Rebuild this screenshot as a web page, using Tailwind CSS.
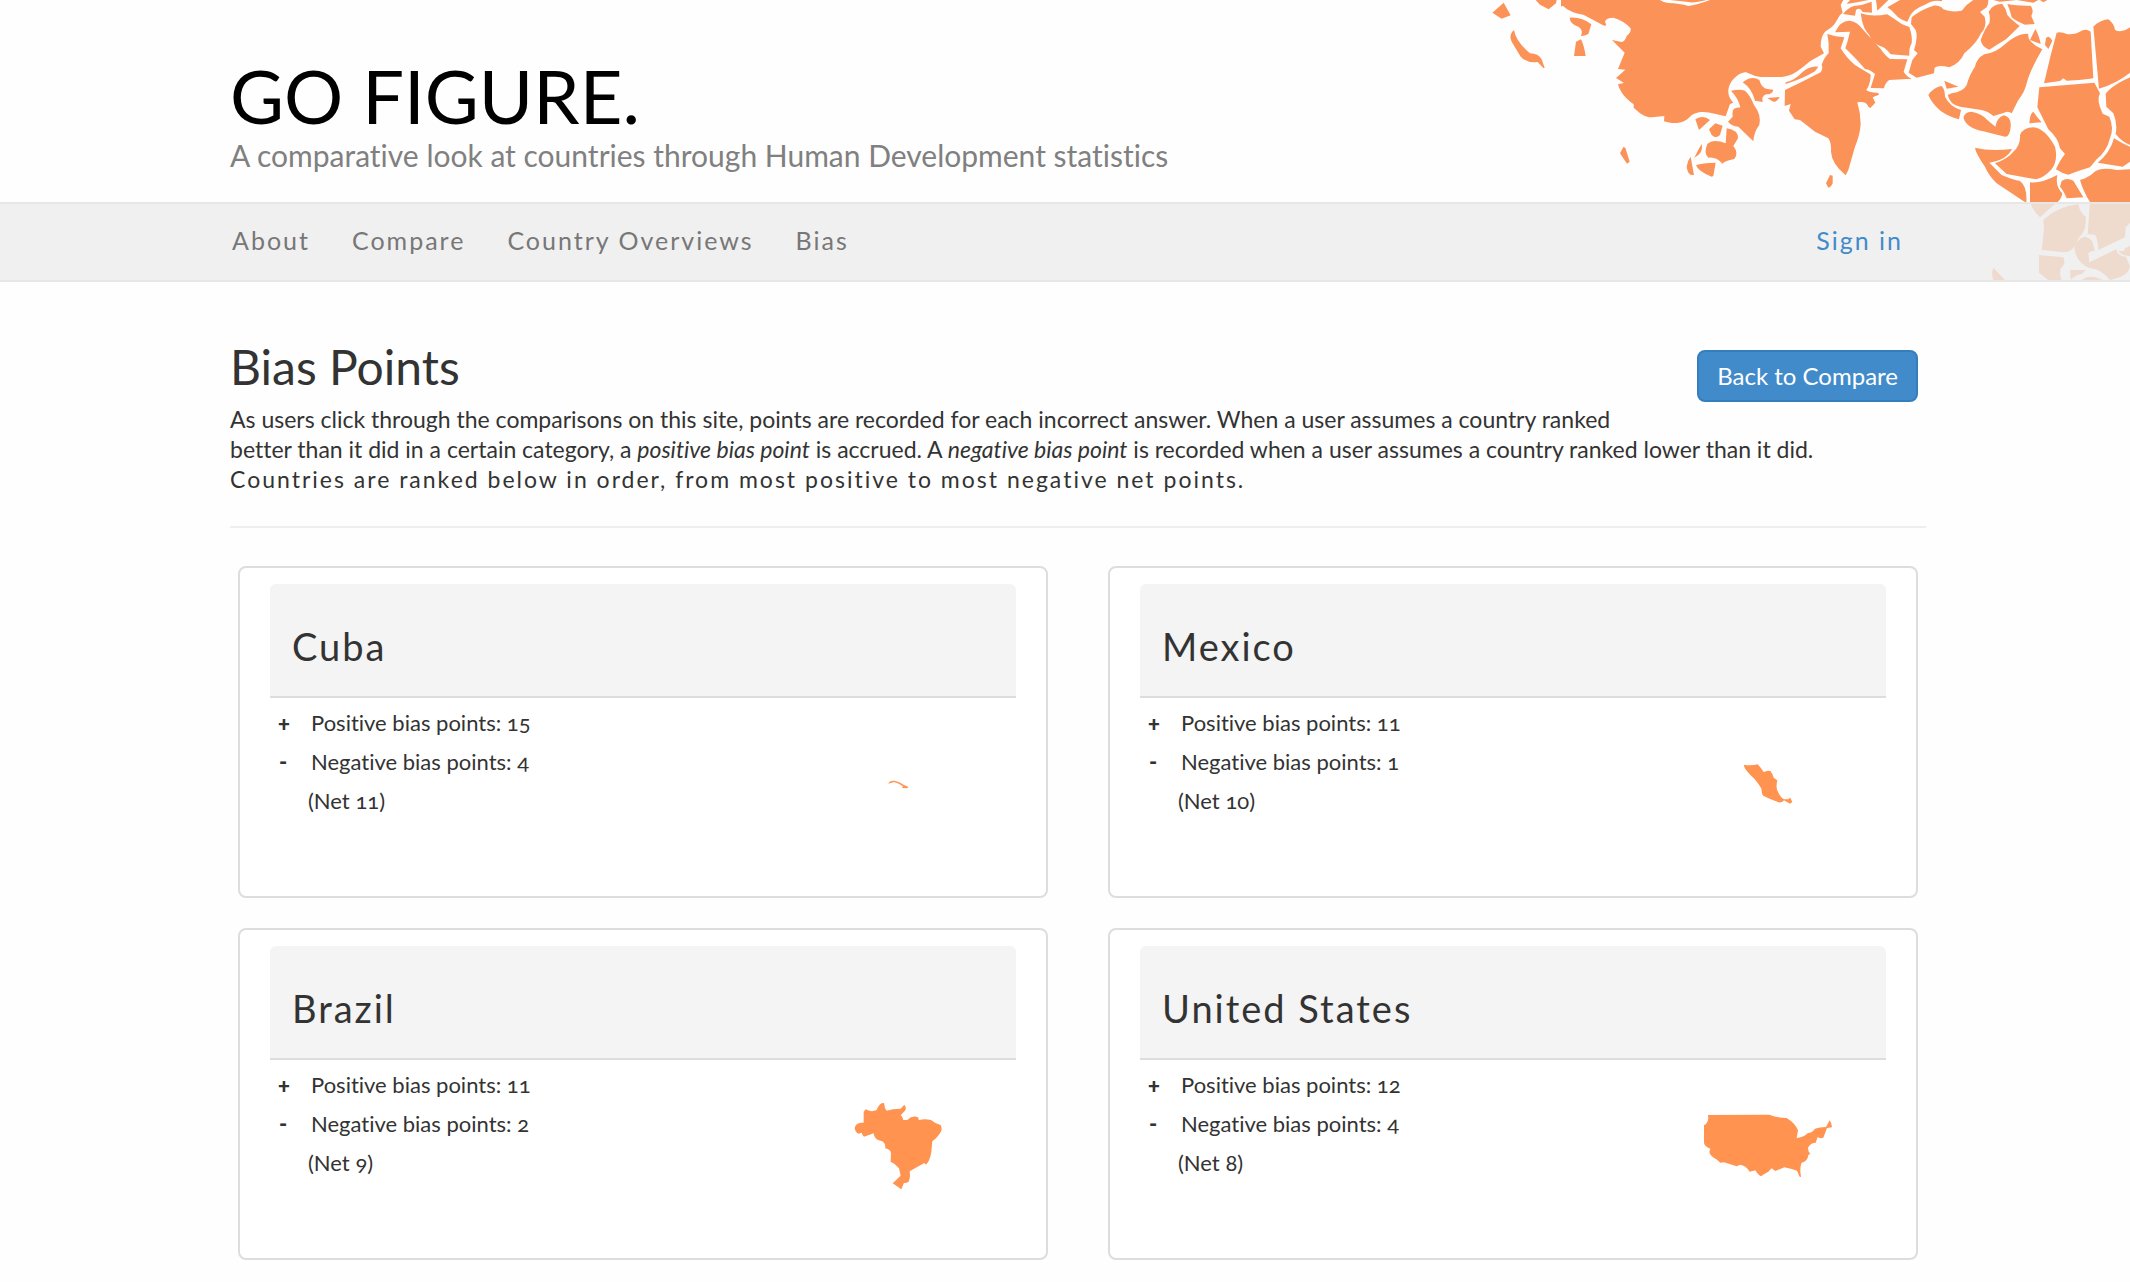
<!DOCTYPE html>
<html lang="en">
<head>
<meta charset="utf-8">
<title>Go Figure - Bias Points</title>
<script src="https://cdn.jsdelivr.net/npm/@tailwindcss/browser@4"></script>
</head>
<body class="relative bg-[#fefefe] font-[Lato,sans-serif] text-[#333] [font-variant-ligatures:none] overflow-x-hidden">

<!-- Decorative world map, behind the header and the translucent nav -->
<svg class="absolute top-0 right-0 w-[650px] h-[280px]" viewBox="0 0 1950 840" fill="#fb9358" aria-hidden="true">
  <path d="M243,0 L243,20 L248,17 Q270,38 310,44 L340,60 L372,77 L379,76 L375,65 Q378,53 400,53 Q432,62 452,85 Q454,97 440,108 Q435,125 425,126 L396,120 L434,158 L414,207 L436,209 L408,234 L432,249 L414,253 C420,275 435,295 461,313 L461,323 C480,340 492,351 515,352 L553,348 L552,364 C580,373 610,372 630,350 C640,338 665,332 690,338 L737,349 L750,312 L760,308 Q745,292 745,275 C745,245 775,217 798,217 C815,222 820,230 845,231 L905,231 C940,228 960,208 990,184 L1032,160 L1022,140 Q1022,110 1035,95 Q1060,80 1065,70 L1080,45 L1088,38 L1082,15 L1090,0 L690,0 Q650,15 625,18 Q600,10 565,9 Q550,7 540,0Z"/>
  <path d="M570,0 L680,0 Q640,10 625,6Z"/>
  <path d="M71,8 L92,46 L65,56 L37,38Z M167,0 L230,0 L228,10 L206,28 L180,14Z M102,90 Q108,125 150,160 Q175,160 185,178 L194,204 L190,204 L173,186 Q140,190 122,170 L95,125 Q85,105 102,90Z M269,53 Q305,50 334,73 L325,102 Q315,108 302,108 Q312,92 295,80 Q270,72 269,53Z M303,118 Q312,135 317,168 L282,168 L288,125Z M430,441 L436,443 L449,485 L441,491 L420,460Z M646,358 Q670,343 690,360 L657,390Z M687,388 L706,370 L728,377 L720,405 Q707,418 695,405Z"/>
  <path d="M740,385 Q775,390 774,415 L760,438 Q777,460 763,477 Q735,482 727,491 Q710,470 685,473 Q670,460 682,432 Q700,415 737,430Z M753,272 Q780,266 795,272 Q810,285 822,315 Q845,345 838,375 Q822,395 820,424 L775,380 Q755,378 744,365 L758,350 Q755,325 768,324 L781,322 Q775,295 753,272Z M788,247 Q815,225 838,240 Q845,265 862,267 L880,269 Q878,283 858,283 Q843,290 848,306 L825,302 Q815,265 788,247Z M862,294 L899,291 Q890,307 880,305Z M665,432 Q672,458 643,473Q655,448 665,432Z M632,470 L642,525 Q623,528 620,500Q622,482 632,470Z M648,496 Q665,488 707,488 L700,528 L695,530 Q655,515 648,496Z"/>
  <g transform="translate(960 0)">
    <path d="M-45,270 L0,248 L62,217 Q70,205 65,195 Q72,172 86,160 Q88,130 82,102 L107,109 L133,112 L122,145 Q140,175 165,195 Q180,205 210,222 L212,225 Q212,250 199,270 Q205,277 235,279 L237,284 L218,292 L226,308 L211,324 L205,320 Q200,302 172,307 Q182,340 182,372 Q180,405 165,440 L145,510 L137,526 Q95,490 93,455 Q95,430 85,415 L45,395 L0,360 L-16,358 L-33,332 L-28,312 L-46,318Z"/>
    <path d="M-43,247 Q-15,240 5,218 Q30,196 55,200 L45,214 Q5,238 -43,252Z M78,550 L90,525 L98,527 L98,550 Q92,563 85,563Z"/>
    <path d="M105,97 Q122,60 150,62 Q172,65 190,90 L240,145 Q258,170 270,177 L322,178 L311,215 Q320,230 335,236 L268,240 Q255,248 252,265 L212,264 L225,222 Q210,208 195,207 L180,190 Q152,160 136,145 Q143,125 150,95Z"/>
    <path d="M182,40 Q215,52 262,43 Q285,58 305,72 L328,81 Q338,110 335,130 Q326,145 328,167 L272,163 Q257,142 240,138 Q215,128 208,105 Q188,88 182,40Z M129,42 Q145,22 162,18 Q190,15 215,5 L216,38 L188,36 Q180,20 168,30 L165,47Z M140,12 L150,0 L205,0 Q170,8 140,12Z M228,0 L265,0 L232,32Z"/>
    <path d="M262,22 L300,0 L427,0 L425,4 Q400,-2 375,14 Q340,27 330,48 L322,65 Q300,60 285,42Q275,30 262,22Z"/>
    <path d="M335,52 Q360,30 400,17 Q420,15 430,28 Q452,38 485,32 Q500,12 520,0 L565,0 Q565,15 560,22 L540,36 L554,50 Q562,80 543,100 Q530,130 493,160 Q480,190 448,202 Q415,194 404,203 L402,220 L350,233 L326,218 L337,180 L353,160 L342,150 Q355,110 347,90 L333,72Z"/>
    <path d="M566,35 Q580,10 607,12 Q618,25 622,45 Q635,60 659,78 L618,118 Q590,135 568,149 Q545,140 542,120 Q555,85 568,70Q572,50 566,35Z M622,12 Q650,18 692,17 Q703,30 694,48 L704,72 L675,74 Q650,65 635,52 Q630,30 622,12Z M580,0 L715,0 L700,8 L650,0 L600,5Z M720,0 L742,0 L730,7Z"/>
    <path d="M553,163 Q585,160 615,133 Q655,97 685,102 Q680,125 727,148 Q690,210 680,250 Q675,275 655,300 L635,340 Q625,330 608,340 L580,348 Q560,330 530,328 L480,320 Q450,315 443,285 L455,280 Q490,275 500,255 Q510,220 525,200 Q530,175 553,163Z"/>
    <path d="M433,242 L475,260 L440,266Z M385,285 Q400,262 425,258 Q435,268 435,290 Q450,320 483,330 L477,358 Q450,352 422,333 Q395,310 385,285Z M491,355 Q492,335 515,335 Q545,340 562,360 L586,380 Q590,353 612,346 Q635,352 632,380 Q630,410 615,410 L550,394 Q500,385 491,355Z M706,87 Q717,105 722,132 L690,120Z M738,115 Q745,102 757,122 L745,147 L735,135Z"/>
    <path d="M770,98 Q785,95 800,102 Q825,105 845,92 Q860,86 872,95 L880,235 Q850,240 800,242 L790,235 L780,243 L732,250 Q750,170 770,98Z M880,80 Q900,60 925,58 Q942,70 945,90 Q965,100 990,82 L990,218 Q950,250 897,266Z"/>
    <path d="M718,262 L883,248 L900,280 Q888,300 908,341 L928,350 Q943,385 930,415 Q920,455 890,478 L870,502 Q850,508 805,524 Q785,520 768,508 Q780,480 795,462 L780,445 Q775,415 745,388 L712,322 Q715,290 718,262Z"/>
    <path d="M990,232 Q930,260 917,282 L919,320 L940,340 Q953,370 947,402 Q965,425 990,435Z M700,335 Q710,350 725,367 L688,370 Q690,340 700,335Z M660,405 Q670,382 700,382 Q735,385 765,440 Q775,480 755,508 Q730,535 708,538 L620,522 L585,490 Q625,475 640,455 Q662,435 660,405Z"/>
    <path d="M525,443 Q570,455 636,447 Q620,480 568,488 L605,525 Q640,540 660,543 Q682,560 679,606 L675,606 L665,600 Q620,570 590,550 Q565,525 555,500 Q527,460 525,443Z M690,547 Q720,552 772,525 Q765,560 787,580 Q785,600 765,612 L720,652 Q700,635 690,606Z M785,543 Q800,532 820,542 L850,592 L800,595 Q790,570 780,560Z"/>
    <path d="M840,540 Q870,530 880,518 Q900,500 950,510 L990,508 L990,670 L977,682 L975,712 L895,750 Q893,715 885,705 L863,702 L870,606 Q850,575 840,540Z M942,415 Q965,430 990,440 L990,485 L968,500 L893,488 Q930,460 942,415Z M730,660 Q770,620 835,612 Q838,635 857,650 Q862,690 835,715 Q822,758 790,757 L725,750 L732,690Z"/>
    <path d="M823,745 Q830,715 855,710 Q878,715 880,735 L885,752 Q865,755 865,760 L868,787 L948,748 Q955,770 978,770 L990,800 Q985,820 960,832 L930,840 Q900,805 870,805 Q830,790 823,745Z M717,765 L790,772 Q800,790 782,805 Q778,825 785,840 L745,840 L717,818Z M810,810 L858,810 L845,822 Q825,825 812,840Z M845,840 Q870,820 908,840Z M580,803 L615,840 L580,840 Q573,820 580,803Z M955,752 Q975,757 975,745 L990,738 L990,768 Q965,768 955,752Z"/>
  </g>
</svg>

<header class="relative h-[202px] pl-[230px] pt-14">
  <h1 class="text-[74px] leading-[80px] text-black">GO FIGURE.</h1>
  <p class="text-[30px] leading-[38px] text-[#808080]">A comparative look at countries through Human Development statistics</p>
</header>

<nav class="relative flex items-center justify-between h-20 pl-[232px] pr-[227px] pb-1 border-y-2 border-[#e7e7e7] bg-[#ececec]/80 text-[25px] leading-8 tracking-[2px] text-[#777]">
  <div class="flex gap-[42px]">
    <a href="#">About</a>
    <a href="#">Compare</a>
    <a href="#">Country Overviews</a>
    <a href="#">Bias</a>
  </div>
  <a href="#" class="text-[#428bca]">Sign in</a>
</nav>

<main class="pl-[230px] pr-[204px] pt-[60px] pb-6">
  <section class="border-b-2 border-[#eee] pb-8">
    <button type="button" class="float-right mt-2 mr-2 h-[52px] px-[18px] rounded-lg border-2 border-[#357ebd] bg-[#428bca] text-[24px] leading-8 text-white">Back to Compare</button>
    <h2 class="text-[48px] leading-[50px] mb-3">Bias Points</h2>
    <p class="text-[23px] leading-[30px]">As users click through the comparisons on this site, points are recorded for each incorrect answer. When a user assumes a country ranked<br>better than it did in a certain category, a <em>positive bias point</em> is accrued. A <em>negative bias point</em> is recorded when a user assumes a country ranked lower than it did.</p>
    <p class="text-[23px] leading-[30px] tracking-[2px]">Countries are ranked below in order, from most positive to most negative net points.</p>
  </section>

  <div class="grid grid-cols-2 gap-x-[60px] gap-y-[30px] px-2 pt-[38px]">
    <article class="h-[332px] rounded-lg border-2 border-[#ddd] bg-white px-[30px] pt-4">
      <h3 class="h-[114px] rounded-t-md border-b-2 border-[#ddd] bg-[#f4f4f4] pl-[22px] pt-10 text-[38px] leading-[44px] tracking-[2px]">Cuba</h3>
      <div class="grid grid-cols-[1fr_236px]">
        <ul class="pt-[5px] text-[22px] leading-[39px] oldstyle-nums">
          <li class="flex"><b class="w-[41px] pl-2 font-black">+</b>Positive bias points: 15</li>
          <li class="flex"><b class="w-[41px] pl-[9px] font-black">-</b>Negative bias points: 4</li>
          <li class="pl-[38px]">(Net 11)</li>
        </ul>
        <div class="flex h-[172px] items-center justify-center">
          <svg class="w-[21px] h-[9px]" viewBox="142 119 63 27" fill="#ff934f" role="img" aria-label="Map of Cuba"><path d="M143,130 Q146,120 162,121 Q178,125 190,134 L204,140 L199,144 L184,143 L187,138 Q172,127 160,125Z"/></svg>
        </div>
      </div>
    </article>

    <article class="h-[332px] rounded-lg border-2 border-[#ddd] bg-white px-[30px] pt-4">
      <h3 class="h-[114px] rounded-t-md border-b-2 border-[#ddd] bg-[#f4f4f4] pl-[22px] pt-10 text-[38px] leading-[44px] tracking-[2px]">Mexico</h3>
      <div class="grid grid-cols-[1fr_236px]">
        <ul class="pt-[5px] text-[22px] leading-[39px] oldstyle-nums">
          <li class="flex"><b class="w-[41px] pl-2 font-black">+</b>Positive bias points: 11</li>
          <li class="flex"><b class="w-[41px] pl-[9px] font-black">-</b>Negative bias points: 1</li>
          <li class="pl-[38px]">(Net 10)</li>
        </ul>
        <div class="flex h-[172px] items-center justify-center">
          <svg class="w-[50px] h-[40px]" viewBox="161 73 150 120" fill="#ff934f" role="img" aria-label="Map of Mexico"><path d="M163,75 Q185,79 205,74 L214,84 L223,97 L236,93 L243,94 Q250,102 253,114 L264,122 Q260,138 263,150 Q272,172 284,179 L296,179 L303,174 L309,187 L302,192 L284,182 Q280,190 268,188 Q245,180 222,168 Q216,162 217,150 Q213,138 195,117 Q165,90 163,75Z"/></svg>
        </div>
      </div>
    </article>

    <article class="h-[332px] rounded-lg border-2 border-[#ddd] bg-white px-[30px] pt-4">
      <h3 class="h-[114px] rounded-t-md border-b-2 border-[#ddd] bg-[#f4f4f4] pl-[22px] pt-10 text-[38px] leading-[44px] tracking-[2px]">Brazil</h3>
      <div class="grid grid-cols-[1fr_236px]">
        <ul class="pt-[5px] text-[22px] leading-[39px] oldstyle-nums">
          <li class="flex"><b class="w-[41px] pl-2 font-black">+</b>Positive bias points: 11</li>
          <li class="flex"><b class="w-[41px] pl-[9px] font-black">-</b>Negative bias points: 2</li>
          <li class="pl-[38px]">(Net 9)</li>
        </ul>
        <div class="flex h-[172px] items-center justify-center">
          <svg class="w-[88px] h-[88px]" viewBox="40 1086 264 264" fill="#ff934f" role="img" aria-label="Map of Brazil"><path d="M69,1115 L75,1108 Q90,1117 107,1111 L113,1100 Q120,1087 130,1089 L133,1105 L138,1112 Q155,1106 180,1106 L191,1094 Q198,1103 194,1111 L180,1126 Q188,1132 188,1140 L200,1140 Q215,1125 232,1132 L235,1141 Q250,1135 271,1140 Q282,1150 300,1155 Q304,1162 302,1172 Q295,1188 275,1204 L272,1235 Q268,1262 256,1274 L251,1269 L207,1294 Q210,1315 203,1326 Q193,1331 190,1328 L182,1348 L156,1330 L180,1307 L175,1285 Q165,1271 150,1265 L151,1240 Q150,1228 134,1225 Q135,1210 125,1204 Q100,1200 99,1180 L70,1190 Q66,1188 63,1178 L53,1181 Q44,1177 42,1164 Q44,1151 60,1148 L69,1148Z"/></svg>
        </div>
      </div>
    </article>

    <article class="h-[332px] rounded-lg border-2 border-[#ddd] bg-white px-[30px] pt-4">
      <h3 class="h-[114px] rounded-t-md border-b-2 border-[#ddd] bg-[#f4f4f4] pl-[22px] pt-10 text-[38px] leading-[44px] tracking-[2px]">United States</h3>
      <div class="grid grid-cols-[1fr_236px]">
        <ul class="pt-[5px] text-[22px] leading-[39px] oldstyle-nums">
          <li class="flex"><b class="w-[41px] pl-2 font-black">+</b>Positive bias points: 12</li>
          <li class="flex"><b class="w-[41px] pl-[9px] font-black">-</b>Negative bias points: 4</li>
          <li class="pl-[38px]">(Net 8)</li>
        </ul>
        <div class="flex h-[172px] items-center justify-center">
          <svg class="w-[130px] h-[64px]" viewBox="41 1124 390 192" fill="#ff934f" role="img" aria-label="Map of the United States"><path d="M56,1127 L240,1126 Q262,1136 292,1136 Q318,1152 326,1173 L322,1196 Q342,1194 356,1181 Q366,1182 377,1168 Q390,1163 410,1163 L421,1143 Q427,1150 428,1164 L413,1166 L402,1195 L393,1197 L385,1193 L379,1210 Q364,1210 356,1225 L358,1237 L363,1243 L357,1247 Q355,1266 337,1270 Q330,1285 335,1313 L331,1312 L323,1294 Q305,1288 285,1284 L258,1295 L247,1287 L237,1297 Q222,1305 215,1311 Q207,1308 198,1293 L181,1297 Q170,1278 152,1276 L142,1281 L104,1269 L93,1270 L83,1261 Q62,1250 60,1238 L63,1228 Q45,1220 44,1210 L44,1158 Q55,1153 57,1137Z"/></svg>
        </div>
      </div>
    </article>
  </div>
</main>
</body>
</html>
